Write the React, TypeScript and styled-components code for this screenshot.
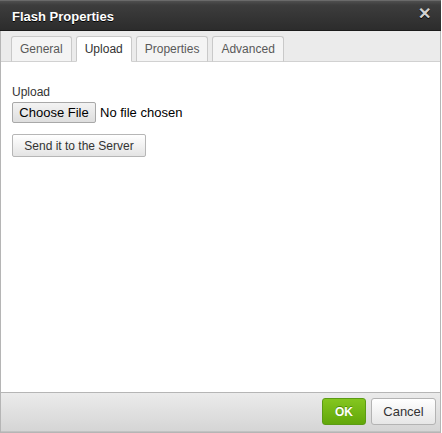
import React from "react";
import styled, { createGlobalStyle } from "styled-components";

const Global = createGlobalStyle`
  html, body { margin: 0; padding: 0; background: #fff; }
  body { font-family: "Liberation Sans", Arial, Helvetica, sans-serif; }
  * { box-sizing: border-box; }
`;

const Dialog = styled.div`
  width: 441px;
  height: 433px;
  display: flex;
  flex-direction: column;
  border: 1px solid #b5b5b5;
  border-top: none;
  background: #fff;
`;

const TitleBar = styled.div`
  height: 31px;
  flex: none;
  display: flex;
  align-items: center;
  justify-content: space-between;
  padding: 0 10px 0 12px;
  margin: 0 -1px;
  background: linear-gradient(#4f4f4f 0px, #3d3d3d 4px, #2c2c2c 100%);
  border-top: 1px solid #6a6a6a;
  border-bottom: 1px solid #1b1b1b;
`;

const Title = styled.span`
  color: #fff;
  font-weight: bold;
  font-size: 13px;
  text-shadow: 0 1px 0 #000;
  margin-top: 1px;
`;

const Close = styled.span`
  color: #d0d0d0;
  font-size: 16px;
  font-weight: bold;
  line-height: 1;
  margin-top: -3px;
  text-shadow: 0 1px 0 #000;
`;

const TabStrip = styled.div`
  flex: none;
  height: 31px;
  display: flex;
  align-items: flex-end;
  gap: 4px;
  padding: 0 0 0 10px;
  background: #ebebeb;
  border-bottom: 1px solid #d1d1d1;
`;

const Tab = styled.div<{ $active?: boolean }>`
  height: 26px;
  margin-bottom: -1px;
  padding: 0 8px;
  display: flex;
  align-items: center;
  font-size: 12px;
  border: 1px solid #c9c9c9;
  border-bottom: ${(p) => (p.$active ? "1px solid #fff" : "1px solid #d1d1d1")};
  border-radius: 3px 3px 0 0;
  background: ${(p) => (p.$active ? "#fff" : "#f4f4f4")};
  color: ${(p) => (p.$active ? "#333" : "#595959")};
`;

const Content = styled.div`
  flex: 1;
  padding: 23px 0 0 11px;
  display: flex;
  flex-direction: column;
  align-items: flex-start;
`;

const Label = styled.div`
  font-size: 12px;
  color: #333;
  line-height: 14px;
`;

const FileRow = styled.div`
  margin-top: 3px;
  display: flex;
  align-items: center;
  gap: 4px;
`;

const FileButton = styled.div`
  width: 84px;
  height: 21px;
  display: flex;
  align-items: center;
  justify-content: center;
  font-size: 13px;
  color: #000;
  border: 1px solid #a8a8a8;
  border-radius: 2px;
  background: linear-gradient(#f3f3f3, #dedede);
`;

const FileText = styled.span`
  font-size: 13px;
  color: #000;
`;

const SendButton = styled.div`
  margin-top: 11px;
  width: 134px;
  height: 23px;
  display: flex;
  align-items: center;
  justify-content: center;
  font-size: 12px;
  color: #333;
  border: 1px solid #b6b6b6;
  border-radius: 2px;
  background: linear-gradient(#ffffff, #e4e4e4);
`;

const Footer = styled.div`
  flex: none;
  height: 40px;
  display: flex;
  align-items: center;
  justify-content: flex-end;
  gap: 5px;
  padding: 0 4px 1px 0;
  border-top: 1px solid #b5b5b5;
  border-bottom: 1px solid #c2c2c2;
  background: linear-gradient(#ebebeb, #d5d5d5);
`;

const FooterButton = styled.div<{ $primary?: boolean }>`
  height: 27px;
  display: flex;
  align-items: center;
  justify-content: center;
  border-radius: 3px;
  font-size: ${(p) => (p.$primary ? "12px" : "13px")};
  font-weight: ${(p) => (p.$primary ? "bold" : "normal")};
  width: ${(p) => (p.$primary ? "44px" : "65px")};
  color: ${(p) => (p.$primary ? "#fff" : "#333")};
  border: 1px solid ${(p) => (p.$primary ? "#5b9b14" : "#b3b3b3")};
  background: ${(p) =>
    p.$primary
      ? "linear-gradient(#84c61f, #62a70a)"
      : "linear-gradient(#ffffff, #e6e6e6)"};
  text-shadow: ${(p) => (p.$primary ? "0 -1px 0 #4f8a08" : "none")};
`;

export default function App() {
  return (
    <>
      <Global />
      <Dialog>
        <TitleBar>
          <Title>Flash Properties</Title>
          <Close>✕</Close>
        </TitleBar>
        <TabStrip>
          <Tab>General</Tab>
          <Tab $active>Upload</Tab>
          <Tab>Properties</Tab>
          <Tab>Advanced</Tab>
        </TabStrip>
        <Content>
          <Label>Upload</Label>
          <FileRow>
            <FileButton>Choose File</FileButton>
            <FileText>No file chosen</FileText>
          </FileRow>
          <SendButton>Send it to the Server</SendButton>
        </Content>
        <Footer>
          <FooterButton $primary>OK</FooterButton>
          <FooterButton>Cancel</FooterButton>
        </Footer>
      </Dialog>
    </>
  );
}
